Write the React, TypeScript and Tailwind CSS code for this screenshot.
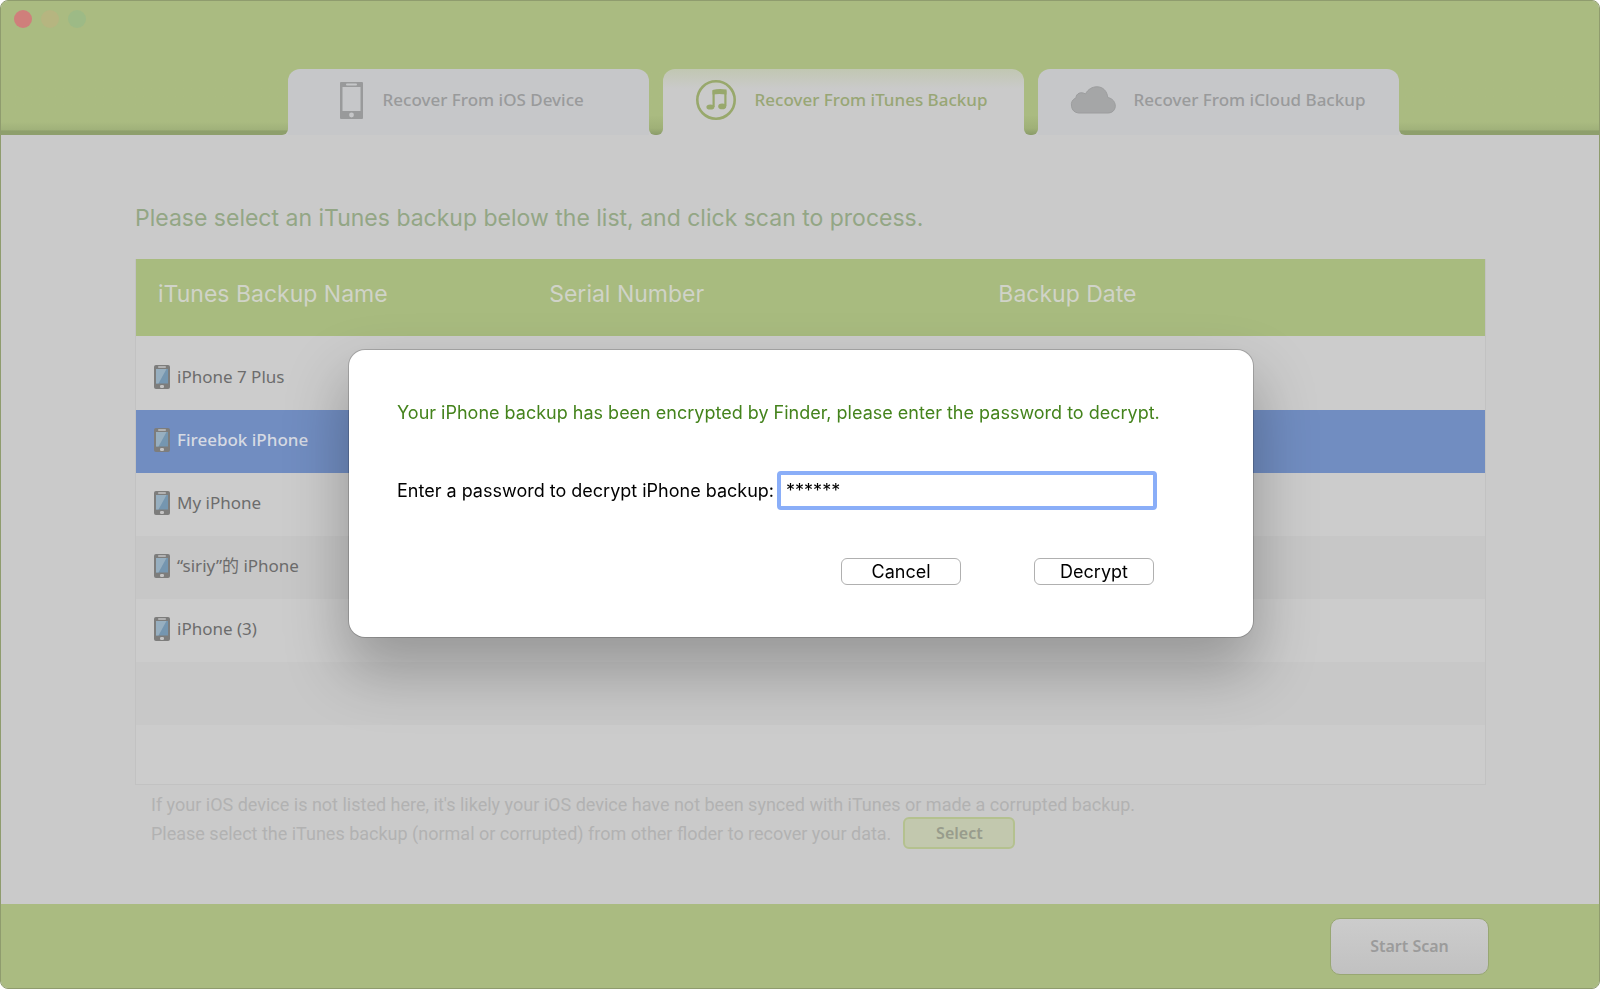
import { useState } from "react";
import type { ReactNode } from "react";

interface Backup {
  id: string;
  name: string;
}

interface SourceTab {
  id: string;
  label: string;
  icon: ReactNode;
  style: string;
}

const PhoneIcon = () => (
  <svg width="23" height="37" viewBox="0 0 23 37" fill="none" aria-hidden="true">
    <rect x="0" y="0" width="23" height="37" rx="1" fill="#999a9b" />
    <rect x="2.5" y="5" width="18" height="24" fill="#c6c7c9" />
    <rect x="6" y="1.6" width="11" height="1.8" rx="0.9" fill="#c6c7c9" />
    <circle cx="11.5" cy="33" r="2.4" fill="#c6c7c9" />
  </svg>
);

const MusicIcon = () => (
  <svg width="42" height="42" viewBox="0 0 42 42" fill="none" aria-hidden="true">
    <circle cx="21" cy="21" r="18.7" stroke="#98a86c" strokeWidth="2.6" />
    <path d="M18.6 28V11.5M30.4 11.5V27" stroke="#98a86c" strokeWidth="2.2" />
    <path d="M17.5 10.9Q24 9.2 31.5 10.5V15.6Q24 14.2 17.5 15.6Z" fill="#98a86c" />
    <ellipse cx="15.4" cy="28" rx="4" ry="2.6" fill="#98a86c" />
    <ellipse cx="27.2" cy="27.4" rx="4" ry="2.8" fill="#98a86c" />
  </svg>
);

const CloudIcon = () => (
  <svg width="46" height="28" viewBox="0 0 46 28" fill="none" aria-hidden="true">
    <path
      d="M8.5 27A8 8 0 0 1 6 11.8C6 7.5 11 5.2 15.5 8C18 3 22.5 .8 27 .8C33 .8 37 5 37.8 11.5C48 13.5 47.5 27 38 27Z"
      fill="#a5a6a7"
      stroke="#9c9d9e"
    />
  </svg>
);

const DeviceIcon = () => (
  <svg width="16" height="24" viewBox="0 0 16 24" fill="none" aria-hidden="true">
    <rect width="16" height="24" rx="2" fill="#7d7d7c" />
    <rect x="4" y="1.3" width="8" height="1.5" rx="0.7" fill="#c4c4c4" />
    <rect x="2" y="4" width="12" height="14.5" fill="#7596b0" />
    <path d="M2 4H12.5L4.5 18.5H2Z" fill="#97afc0" />
    <rect x="6" y="20" width="4" height="3" rx="1.2" fill="#c4c4c4" />
  </svg>
);

const tabs: SourceTab[] = [
  {
    id: "ios",
    label: "Recover From iOS Device",
    icon: <PhoneIcon />,
    style: "gap-5 bg-[#c6c7c9] pl-[52px] pb-1 text-[#999a9b]",
  },
  {
    id: "itunes",
    label: "Recover From iTunes Backup",
    icon: <MusicIcon />,
    style: "gap-[18px] bg-linear-to-b from-[#c1c7b2] to-[#cacaca] to-30% pl-8 pb-1 text-[#98a675]",
  },
  {
    id: "icloud",
    label: "Recover From iCloud Backup",
    icon: <CloudIcon />,
    style: "gap-[18px] bg-[#c6c7c9] pl-8 pb-1 text-[#999a9b]",
  },
];

const backups: Backup[] = [
  { id: "b1", name: "iPhone 7 Plus" },
  { id: "b2", name: "Fireebok iPhone" },
  { id: "b3", name: "My iPhone" },
  { id: "b4", name: "“siriy”的 iPhone" },
  { id: "b5", name: "iPhone (3)" },
];

const Header = () => (
  <header className="bg-[#aabb81]">
    <div className="flex h-[68px] items-start gap-[9px] px-[13px] pt-[9px]">
      <button aria-label="Close" className="size-[18px] rounded-full bg-[#cf7f7b]" />
      <button aria-label="Minimize" className="size-[18px] rounded-full bg-[#b6b580]" />
      <button aria-label="Zoom" className="size-[18px] rounded-full bg-[#9dba86]" />
    </div>
    <nav className="flex h-[66px] bg-linear-to-b from-[#aabb81] from-60% to-[#cacaca] to-60%">
      <div className="min-w-4 flex-[286]">
        <div className="h-full rounded-br-md bg-linear-to-b from-[#aabb81] from-80% via-[#a0b17a] via-92% to-[#8e9f6c] to-94%" />
      </div>
      {tabs.map((tab, i) => (
        <div key={tab.id} className="contents">
          {i > 0 && (
            <div className="w-[14px]">
              <div className="h-full rounded-b-md bg-linear-to-b from-[#aabb81] from-70% via-[#9fb077] via-90% to-[#8a9b69]" />
            </div>
          )}
          <button
            className={`flex w-[361px] items-center rounded-t-xl font-['Noto_Sans',sans-serif] text-[17px] font-medium whitespace-nowrap ${tab.style}`}
          >
            {tab.icon}
            {tab.label}
          </button>
        </div>
      ))}
      <div className="min-w-4 flex-[200]">
        <div className="h-full rounded-bl-md bg-linear-to-b from-[#aabb81] from-80% via-[#a0b17a] via-92% to-[#8e9f6c] to-94%" />
      </div>
    </nav>
  </header>
);

const BackupTable = () => (
  <div className="mt-[25px] h-[526px] border-x border-b border-[#c2c2c2] bg-[#cccccc]">
    <table className="w-full table-fixed border-collapse text-left">
      <colgroup>
        <col className="w-[29%]" />
        <col className="w-[33%]" />
        <col />
      </colgroup>
      <thead>
        <tr className="h-[77px] bg-[#a8bb7f] text-[23px] text-[#d0d3c8]">
          <th className="pb-1.5 pl-[22px] font-normal">iTunes Backup Name</th>
          <th className="pb-1.5 pl-[22px] font-normal">Serial Number</th>
          <th className="pb-1.5 pl-[26px] font-normal">Backup Date</th>
        </tr>
      </thead>
      <tbody className="font-['Noto_Sans','Noto_Sans_CJK_SC',sans-serif] text-[17px] text-[#6c6c6c]">
        <tr className="h-[11px]">
          <td colSpan={3} />
        </tr>
        {backups.map((backup, i) => (
          <tr
            key={backup.id}
            className={
              backup.id === "b2"
                ? "h-[63px] bg-[#718dc1] font-medium text-[#d6dae3]"
                : i % 2
                  ? "h-[63px] bg-[#c7c7c7]"
                  : "h-[63px]"
            }
          >
            <td className="pl-[18px]">
              <div className="flex items-center gap-[7px] pb-1">
                <DeviceIcon />
                {backup.name}
              </div>
            </td>
            <td />
            <td />
          </tr>
        ))}
        <tr className="h-[63px] bg-[#c8c8c8]">
          <td colSpan={3} />
        </tr>
      </tbody>
    </table>
  </div>
);

const DecryptDialog = () => {
  const [password, setPassword] = useState("******");

  return (
    <div className="fixed inset-0 flex items-center justify-center pb-0.5 pl-0.5">
      <form
        role="dialog"
        aria-label="Decrypt backup"
        className="w-[904px] rounded-2xl bg-white pt-[49px] pr-[96px] pb-[52px] pl-12 text-[18px] text-black shadow-[0_0_0_1px_rgba(0,0,0,0.18),0_30px_60px_4px_rgba(0,0,0,0.26)]"
        onSubmit={(e) => e.preventDefault()}
      >
        <p className="leading-7 whitespace-nowrap text-[#44831c]">
          Your iPhone backup has been encrypted by Finder, please enter the password to decrypt.
        </p>
        <div className="mt-11 flex items-center gap-[3px]">
          <label htmlFor="password" className="whitespace-nowrap">
            Enter a password to decrypt iPhone backup:
          </label>
          <input
            id="password"
            type="text"
            value={password}
            onChange={(e) => setPassword(e.target.value)}
            className="h-[39px] min-w-0 flex-1 rounded-sm border-4 border-[#8aaef8] bg-white px-[5px] outline-none"
          />
        </div>
        <div className="mt-12 flex justify-end gap-[73px] pr-[3px]">
          <button
            type="button"
            className="flex h-[27px] w-[120px] items-center justify-center rounded-md border border-[#b0b0b0]"
          >
            Cancel
          </button>
          <button
            type="submit"
            className="flex h-[27px] w-[120px] items-center justify-center rounded-md border border-[#b0b0b0]"
          >
            Decrypt
          </button>
        </div>
      </form>
    </div>
  );
};

const App = () => {
  return (
    <div className="flex min-h-screen flex-col overflow-hidden rounded-lg border border-[#8f9c6e] bg-[#cacaca] font-['Inter',sans-serif]">
      <Header />
      <main className="flex-1 pt-[67px] pr-[113px] pl-[134px]">
        <h1 className="text-[23px] leading-8 text-[#93a685]">
          Please select an iTunes backup below the list, and click scan to process.
        </h1>
        <BackupTable />
        <div className="mt-2 pl-4 font-['Roboto',sans-serif] text-[18px] text-[#b2b2b2]">
          <p className="leading-6">
            If your iOS device is not listed here, it's likely your iOS device have not been synced with iTunes or made a corrupted backup.
          </p>
          <div className="flex items-center gap-3">
            <p>Please select the iTunes backup (normal or corrupted) from other floder to recover your data.</p>
            <button className="h-8 w-28 rounded-md border-2 border-[#b4c18f] bg-[#c2c8ae] font-['Noto_Sans',sans-serif] text-[16px] font-semibold text-[#989c8c]">
              Select
            </button>
          </div>
        </div>
      </main>
      <footer className="flex h-[84px] items-center justify-end bg-[#aabb81] pr-[110px]">
        <button className="h-[57px] w-[159px] rounded-[10px] border border-[#98a773] bg-linear-to-b from-[#cccccc] to-[#c1c1c1] font-['Noto_Sans',sans-serif] text-[16px] font-semibold text-[#9b9b9b]">
          Start Scan
        </button>
      </footer>
      <DecryptDialog />
    </div>
  );
};

export default App;
